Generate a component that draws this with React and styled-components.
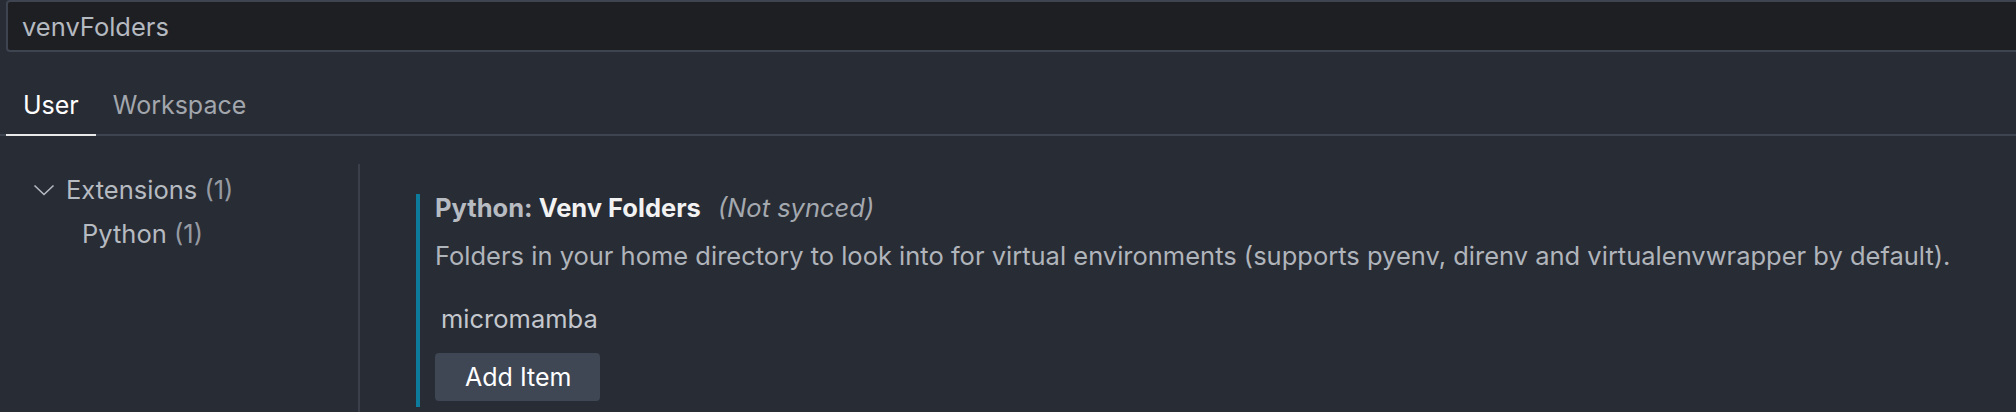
import React from 'react';
import styled, { createGlobalStyle } from 'styled-components';

const GlobalStyle = createGlobalStyle`
  html, body {
    margin: 0;
    padding: 0;
    background: #282c34;
    overflow: hidden;
  }
  body {
    font-family: Inter, "Noto Sans", sans-serif;
    font-size: 25.5px;
    -webkit-font-smoothing: antialiased;
  }
`;

const Page = styled.div`
  width: 2016px;
  height: 412px;
  background: #282c34;
  overflow: hidden;
`;

const SearchBox = styled.div`
  height: 52px;
  box-sizing: border-box;
  margin-left: 6px;
  margin-right: -20px;
  padding: 1px 0 0 14px;
  display: flex;
  align-items: center;
  background: #1e1f23;
  border: 2px solid #3f4451;
  border-radius: 4px;
  color: #b5b9c0;
  line-height: 36px;
`;

const TabBar = styled.div`
  display: flex;
  padding-left: 6px;
  border-bottom: 2px solid #3f4451;
`;

const Tab = styled.div`
  padding: 35px 17px 11px;
  font-size: 25px;
  line-height: 36px;
  color: ${(p) => (p.active ? '#ffffff' : '#a2a6ad')};
  border-bottom: 2px solid ${(p) => (p.active ? '#e8e8e8' : 'transparent')};
  margin-bottom: -2px;
`;

const Body = styled.div`
  display: flex;
`;

const Sidebar = styled.div`
  width: 358px;
  margin-top: 28px;
  padding-top: 4px;
  height: 260px;
  border-right: 2px solid #3a3f4a;
  flex-shrink: 0;
`;

const TocRow = styled.div`
  display: flex;
  align-items: center;
  height: 44px;
  line-height: 44px;
  padding-left: ${(p) => (p.indent ? '82px' : '32px')};
  color: #b6bac1;
`;

const Count = styled.span`
  color: #959aa2;
`;

const Chevron = styled.svg`
  width: 24px;
  height: 24px;
  margin-right: 10px;
`;

const Content = styled.div`
  padding-left: 56px;
  padding-top: 58px;
`;

const SettingItem = styled.div`
  border-left: 4px solid #0d7b9b;
  padding: 0 0 6px 15px;
`;

const Title = styled.div`
  line-height: 27px;
  font-weight: 700;
  color: #b7bbc2;
  white-space: nowrap;
`;

const Key = styled.span`
  color: #f2f2f2;
`;

const Overrides = styled.span`
  margin-left: 17px;
  font-weight: 400;
  font-style: italic;
  color: #a4a8af;
`;

const Description = styled.div`
  margin-top: 17px;
  line-height: 36px;
  color: #b0b4bb;
  white-space: nowrap;
`;

const ListRow = styled.div`
  margin-top: 23px;
  height: 44px;
  line-height: 44px;
  padding-left: 6px;
  color: #c4c8ce;
`;

const Button = styled.button`
  display: block;
  margin-top: 12px;
  height: 48px;
  padding: 0 29px 0 30px;
  border: none;
  border-radius: 4px;
  background: #3f4654;
  color: #ffffff;
  font-family: inherit;
  font-size: 25px;
  line-height: 48px;
`;

export default function App() {
  return (
    <Page>
      <GlobalStyle />
      <SearchBox>venvFolders</SearchBox>
      <TabBar>
        <Tab active>User</Tab>
        <Tab>Workspace</Tab>
      </TabBar>
      <Body>
        <Sidebar>
          <TocRow>
            <Chevron viewBox="0 0 24 24" fill="none">
              <path d="M2.5 7.5 L12 16.5 L21.5 7.5" stroke="#b6bac1" strokeWidth="1.6" />
            </Chevron>
            Extensions&nbsp;<Count>(1)</Count>
          </TocRow>
          <TocRow indent>
            Python&nbsp;<Count>(1)</Count>
          </TocRow>
        </Sidebar>
        <Content>
          <SettingItem>
            <Title>
              Python: <Key>Venv Folders</Key>
              <Overrides>(Not synced)</Overrides>
            </Title>
            <Description>
              Folders in your home directory to look into for virtual environments (supports pyenv, direnv and virtualenvwrapper by default).
            </Description>
            <ListRow>micromamba</ListRow>
            <Button>Add Item</Button>
          </SettingItem>
        </Content>
      </Body>
    </Page>
  );
}
